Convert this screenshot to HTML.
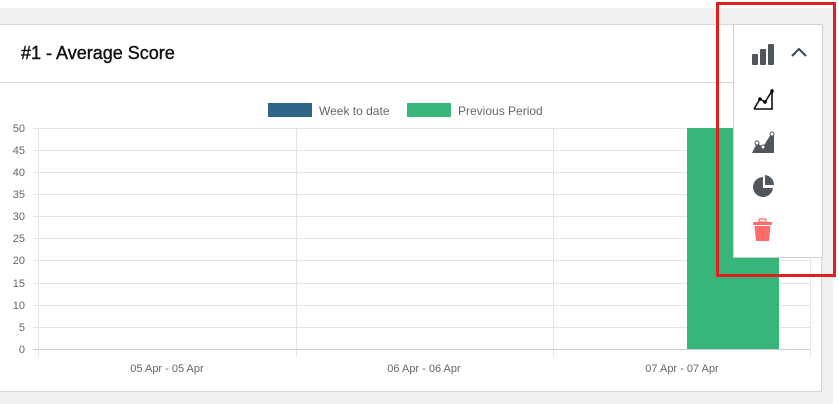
<!DOCTYPE html>
<html><head><style>
body{margin:0;width:839px;height:404px;overflow:hidden;background:#fff;font-family:"Liberation Sans",sans-serif;position:relative}
.grey{position:absolute;left:0;top:8px;width:833px;height:396px;background:#efefef}
.card{position:absolute;left:0;top:24px;width:821px;height:366px;background:#fff;border:1px solid #d6d6d6;border-left:none}
.hdr{position:absolute;left:0;top:0;width:821px;height:57px;border-bottom:1px solid #d6d6d6}
.hdr span{position:absolute;left:21px;top:18px;font-size:18px;color:#111;-webkit-text-stroke:0.4px #111}
.menu{position:absolute;left:733px;top:24px;width:88px;height:232px;background:#fff;border:1px solid #d0d0d0}
.red{position:absolute;left:716px;top:2px;width:114px;height:269px;border:3px solid #e02020}
</style></head><body>
<div class="grey"></div>
<div class="card"><div class="hdr"><span>#1 - Average Score</span></div></div>
<svg style="position:absolute;left:0;top:0" width="839" height="404">
<g font-size="12" fill="#666" font-family="Liberation Sans">
<rect x="268" y="103" width="44" height="14" fill="#2f6589"/>
<text x="319" y="115">Week to date</text>
<rect x="407" y="103" width="44" height="14" fill="#36b779"/>
<text x="458" y="115">Previous Period</text>
</g>
<g stroke="#e4e4e4" stroke-width="1">
<line x1="33" y1="128.5" x2="810" y2="128.5"/><line x1="33" y1="150.5" x2="810" y2="150.5"/>
<line x1="33" y1="172.5" x2="810" y2="172.5"/><line x1="33" y1="194.5" x2="810" y2="194.5"/>
<line x1="33" y1="216.5" x2="810" y2="216.5"/><line x1="33" y1="238.5" x2="810" y2="238.5"/>
<line x1="33" y1="260.5" x2="810" y2="260.5"/><line x1="33" y1="283.5" x2="810" y2="283.5"/>
<line x1="33" y1="305.5" x2="810" y2="305.5"/><line x1="33" y1="327.5" x2="810" y2="327.5"/>
<line x1="38.5" y1="128" x2="38.5" y2="357"/><line x1="296.5" y1="128" x2="296.5" y2="357"/>
<line x1="553.5" y1="128" x2="553.5" y2="357"/><line x1="810.5" y1="128" x2="810.5" y2="357"/>
</g>
<line x1="33" y1="349.5" x2="810" y2="349.5" stroke="#ccc"/>
<rect x="687" y="128" width="92" height="221" fill="#36b779"/>
<g font-size="11" fill="#666" text-anchor="end" font-family="Liberation Sans">
<text x="25" y="132">50</text><text x="25" y="154">45</text><text x="25" y="176">40</text>
<text x="25" y="198">35</text><text x="25" y="220">30</text><text x="25" y="242">25</text>
<text x="25" y="264">20</text><text x="25" y="287">15</text><text x="25" y="309">10</text>
<text x="25" y="331">5</text><text x="25" y="353">0</text>
</g>
<g font-size="11" fill="#666" text-anchor="middle" font-family="Liberation Sans">
<text x="167" y="372">05 Apr - 05 Apr</text><text x="424" y="372">06 Apr - 06 Apr</text><text x="682" y="372">07 Apr - 07 Apr</text>
</g>
</svg>
<div class="menu"></div>
<svg style="position:absolute;left:0;top:0" width="839" height="404">
<g fill="#4f565e">
<rect x="752" y="54" width="6" height="11" rx="1"/><rect x="760" y="49" width="6" height="16" rx="1"/><rect x="768" y="44" width="6" height="21" rx="1"/>
</g>
<path d="M792 56 L799 49 L806 56" fill="none" stroke="#2c4a66" stroke-width="2"/>
<path d="M754 109 L773 109 M754 109 L760 99 L765 102 L772 91 L772 109" fill="none" stroke="#111" stroke-width="1.6"/>
<circle cx="760" cy="99" r="1.8"/><circle cx="765" cy="102" r="1.8"/><circle cx="772" cy="91" r="1.8"/>
<path d="M752 153 L757 143 L763 147 L771 134 L774 134 L774 153 Z" fill="#4f565e"/>
<circle cx="757" cy="143" r="2" fill="#fff" stroke="#4f565e"/><circle cx="763" cy="147" r="2" fill="#fff" stroke="#4f565e"/><circle cx="772" cy="134" r="2" fill="#fff" stroke="#4f565e"/>
<path d="M763 177 A10 10 0 1 0 773 188 L763 188 Z" fill="#4f565e"/>
<path d="M765 175 A10 10 0 0 1 774 185 L765 185 Z" fill="#4f565e"/>
<rect x="753" y="222" width="19" height="3" rx="1" fill="#ff6b6b"/>
<rect x="759" y="219" width="7" height="3" rx="1" fill="none" stroke="#ff6b6b" stroke-width="1.3"/>
<path d="M754.5 226 L770.5 226 L769 241 L756 241 Z" fill="#ff6b6b"/>
</svg>
<div class="red"></div>
</body></html>
